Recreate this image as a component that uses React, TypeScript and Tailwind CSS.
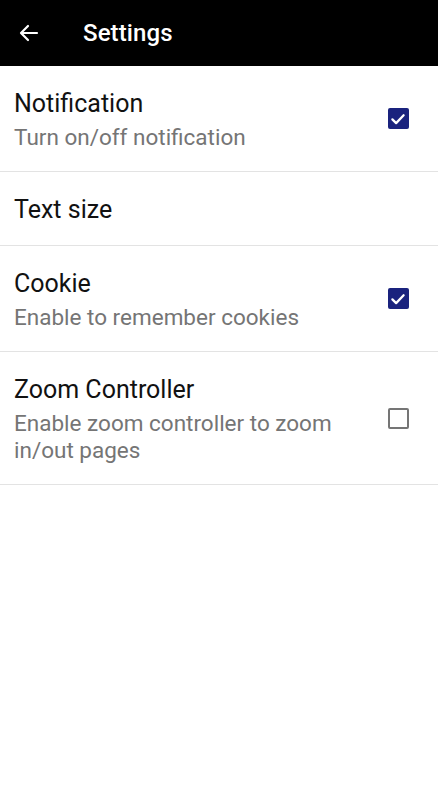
import { useState } from "react";

interface SettingItem {
  id: string;
  title: string;
  subtitle?: string;
  checkable: boolean;
}

const items: SettingItem[] = [
  { id: "notification", title: "Notification", subtitle: "Turn on/off notification", checkable: true },
  { id: "textsize", title: "Text size", checkable: false },
  { id: "cookie", title: "Cookie", subtitle: "Enable to remember cookies", checkable: true },
  {
    id: "zoom",
    title: "Zoom Controller",
    subtitle: "Enable zoom controller to zoom in/out pages",
    checkable: true,
  },
];

function Checkbox({ checked, onChange }: { checked: boolean; onChange: () => void }) {
  return (
    <button
      onClick={onChange}
      className="w-[40px] h-[40px] flex items-center justify-center shrink-0"
    >
      {checked ? (
        <span className="w-[21px] h-[21px] rounded-[2px] bg-[#1a237e] flex items-center justify-center">
          <svg width="18" height="18" viewBox="0 0 24 24" fill="none">
            <path
              d="M4.5 12.5l5 5L19.5 7"
              stroke="#ffffff"
              strokeWidth="3"
              strokeLinecap="round"
              strokeLinejoin="round"
            />
          </svg>
        </span>
      ) : (
        <span className="w-[21px] h-[21px] rounded-[2px] border-2 border-[#757575]" />
      )}
    </button>
  );
}

export default function App() {
  const [checked, setChecked] = useState<Record<string, boolean>>({
    notification: true,
    cookie: true,
    zoom: false,
  });

  return (
    <div className="w-[438px] min-h-[800px] bg-white" style={{ fontFamily: "Roboto, 'Noto Sans', sans-serif" }}>
      {/* Toolbar */}
      <div className="h-[66px] bg-black flex items-center">
        <button className="w-[56px] h-[56px] flex items-center justify-center ml-[1px]">
          <svg width="24" height="24" viewBox="0 0 24 24" fill="none">
            <path
              d="M20 12H4.5M11 5l-7 7 7 7"
              stroke="#ffffff"
              strokeWidth="2.2"
              strokeLinecap="round"
              strokeLinejoin="round"
            />
          </svg>
        </button>
        <h1 className="ml-[26px] text-[24px] font-medium text-white tracking-[0.1px]">Settings</h1>
      </div>

      {/* Settings list */}
      <div>
        {items.map((item) => (
          <div
            key={item.id}
            className="flex items-center border-b border-[#e3e3e3] pl-[14px] pr-[20px]"
          >
            <div className="flex-1 pt-[23px] pb-[20px] pr-[30px]">
              <p className="text-[25px] leading-[30px] text-[#111111]">{item.title}</p>
              {item.subtitle && (
                <p className="mt-[5px] text-[22.5px] leading-[27px] text-[#757575]">{item.subtitle}</p>
              )}
            </div>
            {item.checkable && (
              <Checkbox
                checked={!!checked[item.id]}
                onChange={() => setChecked((prev) => ({ ...prev, [item.id]: !prev[item.id] }))}
              />
            )}
          </div>
        ))}
      </div>
    </div>
  );
}
